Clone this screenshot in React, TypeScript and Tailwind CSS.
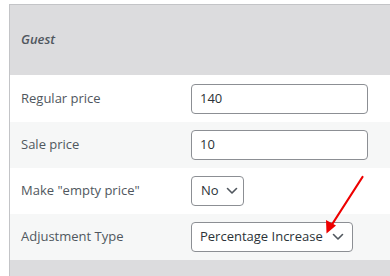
import React from "react";

const font = { fontFamily: '"Open Sans", "Noto Sans", "Liberation Sans", sans-serif' };

function Chevron() {
  return (
    <svg width="12" height="8" viewBox="0 0 12 8" fill="none">
      <path d="M1.5 1.5 L6 6 L10.5 1.5" stroke="#50575e" strokeWidth="1.6" strokeLinecap="round" strokeLinejoin="round" />
    </svg>
  );
}

function Row({ label, bg, h, children }: { label: string; bg: string; h: string; children: React.ReactNode }) {
  return (
    <div className={`flex items-center ${bg} ${h}`}>
      <div className="w-[181px] pl-[11px] text-[13px] text-[#50575e] whitespace-nowrap">{label}</div>
      <div className="flex items-center">{children}</div>
    </div>
  );
}

export default function App() {
  return (
    <div className="relative w-[390px] h-[276px] overflow-hidden bg-white" style={font}>
      <div className="ml-[9px] mt-[4px] border-t border-l border-[#c3c4c7]">
        <div className="h-[70px] bg-[#dcdcde] flex items-center pl-[11px]">
          <span className="italic font-semibold text-[13px] text-[#50575e]">Guest</span>
        </div>
        <Row label="Regular price" bg="bg-white" h="h-[47px]">
          <div className="w-[177px] h-[30px] border border-[#8c8f94] rounded-[4px] bg-white flex items-center pl-[8px] text-[13px] text-[#2c3338]">140</div>
        </Row>
        <Row label="Sale price" bg="bg-[#f6f7f7]" h="h-[46px]">
          <div className="w-[177px] h-[30px] border border-[#8c8f94] rounded-[4px] bg-white flex items-center pl-[8px] text-[13px] text-[#2c3338]">10</div>
        </Row>
        <Row label={'Make "empty price"'} bg="bg-white" h="h-[46px]">
          <div className="w-[53px] h-[30px] border border-[#8c8f94] rounded-[4px] bg-white flex items-center pl-[9px] gap-[7px] text-[13px] text-[#2c3338]">
            <span>No</span>
            <Chevron />
          </div>
        </Row>
        <Row label="Adjustment Type" bg="bg-[#f6f7f7]" h="h-[46px]">
          <div className="w-[162px] h-[30px] border border-[#8c8f94] rounded-[4px] bg-white flex items-center justify-between pl-[8px] pr-[8px] text-[13px] text-[#2c3338] whitespace-nowrap">
            <span>Percentage Increase</span>
            <Chevron />
          </div>
        </Row>
        <div className="h-[20px] bg-[#dcdcde]" />
      </div>
      <svg className="absolute left-0 top-0 pointer-events-none" width="390" height="276" viewBox="0 0 390 276">
        <line x1="362.5" y1="177" x2="331" y2="226" stroke="#ee0000" strokeWidth="2.2" strokeLinecap="round" />
        <polygon points="326.5,233.5 326,220 336,225.5" fill="#ee0000" />
      </svg>
    </div>
  );
}
